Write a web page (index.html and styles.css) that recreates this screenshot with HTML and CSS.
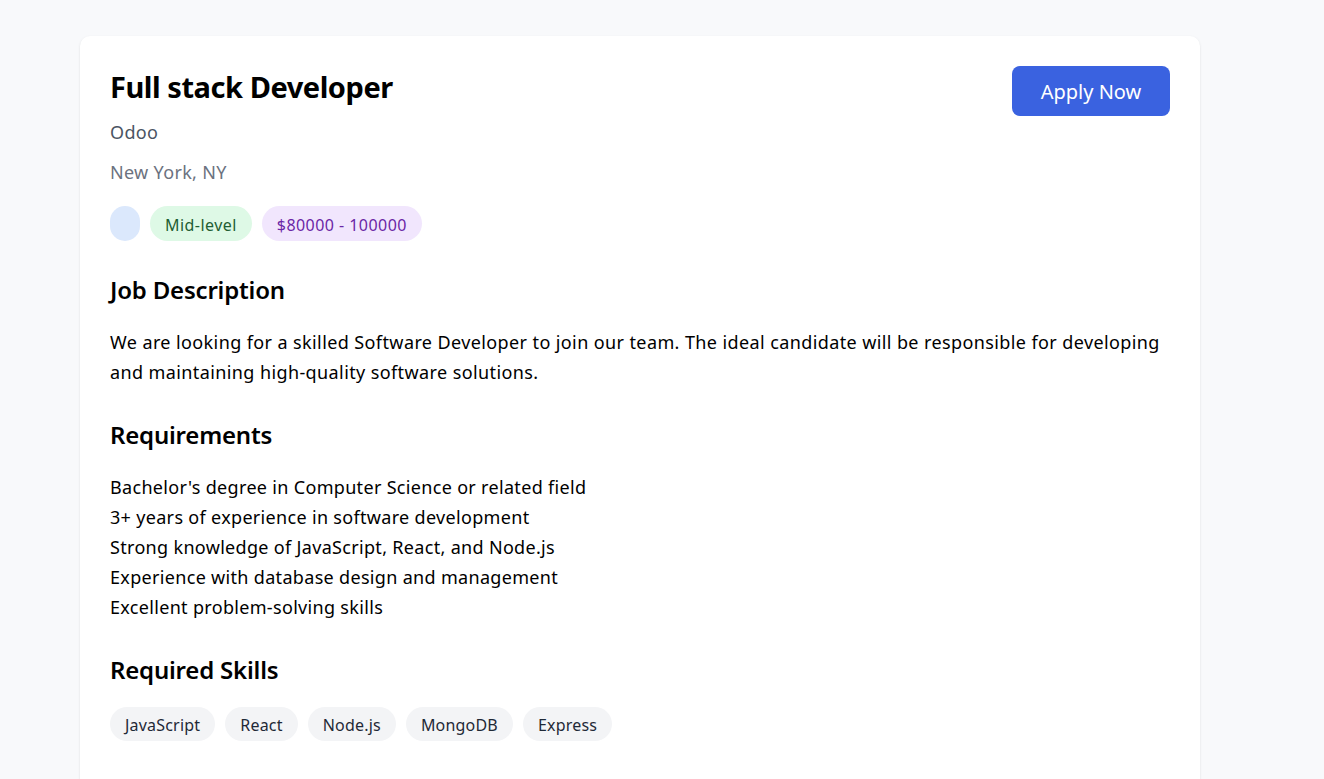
FILE: index.html
```html
<!DOCTYPE html>
<html lang="en">
<head>
<meta charset="utf-8">
<title>Full stack Developer - Odoo</title>
<link rel="stylesheet" href="styles.css">
</head>
<body>
<main class="page">
  <article class="card">
    <header class="job-header">
      <div class="job-info">
        <h1 class="job-title">Full stack Developer</h1>
        <p class="company">Odoo</p>
        <p class="location">New York, NY</p>
        <div class="tags">
          <span class="tag tag-blue"></span>
          <span class="tag tag-green">Mid-level</span>
          <span class="tag tag-purple">$80000 - 100000</span>
        </div>
      </div>
      <button class="apply-btn" type="button">Apply Now</button>
    </header>

    <section class="section">
      <h2 class="section-title">Job Description</h2>
      <p class="section-text">We are looking for a skilled Software Developer to join our team. The ideal candidate will be responsible for developing and maintaining high-quality software solutions.</p>
    </section>

    <section class="section">
      <h2 class="section-title">Requirements</h2>
      <ul class="req-list">
        <li>Bachelor's degree in Computer Science or related field</li>
        <li>3+ years of experience in software development</li>
        <li>Strong knowledge of JavaScript, React, and Node.js</li>
        <li>Experience with database design and management</li>
        <li>Excellent problem-solving skills</li>
      </ul>
    </section>

    <section class="section">
      <h2 class="section-title">Required Skills</h2>
      <div class="skills">
        <span class="skill">JavaScript</span>
        <span class="skill">React</span>
        <span class="skill">Node.js</span>
        <span class="skill">MongoDB</span>
        <span class="skill">Express</span>
      </div>
    </section>
  </article>
</main>
</body>
</html>
```
FILE: styles.css
```css
* { box-sizing: border-box; }
html, body { margin: 0; padding: 0; }
body {
  background: #f8f9fb;
  font-family: "Noto Sans", "Open Sans", sans-serif;
  color: #000;
  letter-spacing: 0.02em;
}
.page {
  padding: 36px 0 0 80px;
}
.card {
  width: 1120px;
  min-height: 760px;
  background: #fff;
  border-radius: 10px;
  box-shadow: 0 1px 3px rgba(0,0,0,0.08), 0 1px 2px rgba(0,0,0,0.04);
  padding: 30px 30px 40px;
}
.job-header {
  display: flex;
  justify-content: space-between;
  align-items: flex-start;
}
.job-title {
  margin: 0;
  font-size: 29px;
  line-height: 42px;
  font-weight: 700;
  letter-spacing: -0.45px;
}
.company {
  margin: 10px 0 0;
  font-size: 18px;
  line-height: 28px;
  color: #4b5563;
}
.location {
  margin: 12px 0 0;
  font-size: 18px;
  line-height: 28px;
  color: #6b7280;
}
.tags {
  display: flex;
  gap: 10px;
  margin-top: 20px;
}
.tag {
  display: inline-block;
  min-width: 30px;
  height: 35px;
  padding: 3px 15px 0;
  border-radius: 999px;
  font-size: 16px;
  line-height: 32px;
  letter-spacing: 0.45px;
}
.tag-blue { background: #dbe8fc; }
.tag-green { background: #def9e6; color: #1f5e33; }
.tag-purple { background: #f1e6fd; color: #6b26a6; }
.apply-btn {
  font-family: inherit;
  letter-spacing: 0;
  background: #3a62e0;
  color: #fff;
  border: 0;
  border-radius: 8px;
  width: 158px;
  height: 50px;
  padding: 2px 0 0;
  font-size: 20px;
  line-height: 30px;
  cursor: pointer;
}
.section { margin-top: 33px; }
.section + .section { margin-top: 32px; }
.section-title {
  margin: 0;
  font-size: 24px;
  line-height: 32px;
  font-weight: 600;
  letter-spacing: -0.2px;
}
.section-text {
  margin: 21px 0 0;
  font-size: 18px;
  line-height: 30px;
  letter-spacing: 0.022em;
}
.req-list {
  list-style: none;
  margin: 21px 0 0;
  padding: 0;
  font-size: 18px;
  line-height: 30px;
}
.skills {
  display: flex;
  gap: 10px;
  margin-top: 21px;
}
.skill {
  height: 34px;
  padding: 2px 15px 0;
  border-radius: 999px;
  background: #f3f4f6;
  color: #1f2937;
  font-size: 16px;
  line-height: 32px;
  letter-spacing: 0.2px;
}
```
